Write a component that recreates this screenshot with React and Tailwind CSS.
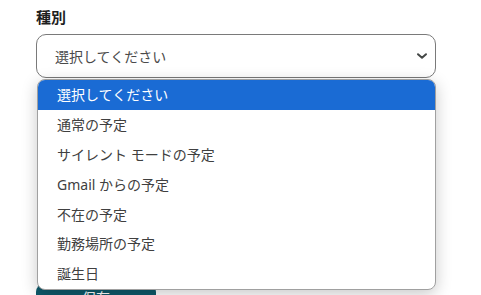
import React from "react";

const items = [
  "選択してください",
  "通常の予定",
  "サイレント モードの予定",
  "Gmail からの予定",
  "不在の予定",
  "勤務場所の予定",
  "誕生日",
];

export default function App() {
  return (
    <div
      className="relative w-[481px] h-[295px] overflow-hidden bg-white"
      style={{ fontFamily: '"Noto Sans", "Noto Sans CJK JP", sans-serif' }}
    >
      <div className="pl-[36px] pt-[7px] flex flex-col">
        <div className="text-[15px] leading-[20px] font-bold text-[#1f1f1f]">種別</div>
        <div className="mt-[7px] w-[400px] h-[44px] border border-[#7a7a7a] rounded-[10px] flex items-center justify-between pl-[18px] pr-[6px] bg-white">
          <span className="text-[14px] text-[#4a4a4a]">選択してください</span>
          <svg width="14" height="10" viewBox="0 0 14 10">
            <path d="M3 3.2 L7 6.8 L11 3.2" fill="none" stroke="#444746" strokeWidth="2" strokeLinecap="round" strokeLinejoin="round" />
          </svg>
        </div>
        <div className="mt-[206px] w-[120px] h-[36px] rounded-[8px] bg-[#0e5a6b] flex items-start justify-center pt-[4px] text-white text-[14px] leading-[20px]">
          保存
        </div>
      </div>

      <div className="absolute left-[37px] top-[79px] w-[399px] border border-[#a0a0a0] rounded-[8px] bg-white overflow-hidden shadow-[0_4px_16px_rgba(0,0,0,0.22)]">
        {items.map((t, i) => (
          <div
            key={t}
            className={
              i === 0
                ? "h-[29.8px] flex items-center pl-[19px] text-[14px] bg-[#1a6bd4] text-white"
                : "h-[29.8px] flex items-center pl-[19px] text-[14px] text-[#404040]"
            }
          >
            {t}
          </div>
        ))}
      </div>
    </div>
  );
}
